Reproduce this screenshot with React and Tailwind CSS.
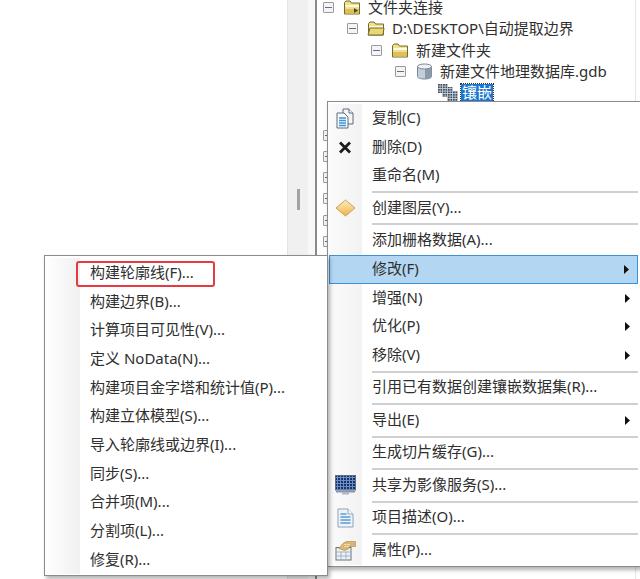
// App.jsx
const font = { fontFamily: '"Noto Sans", "Noto Sans CJK SC", sans-serif' };

const FolderIcon = ({ play, open }) => (
  <svg width="18" height="15" viewBox="0 0 18 15">
    <path d="M1.5 14V2.5L3 1h4l1.5 2H16.5V14z" fill="#f0e08c" stroke="#77692c" />
    <path d="M2.5 5h13.5v2H2.5z" fill="#fffbe0" />
    <path d="M2 9h14v4.5H2z" fill="#dcc254" />
    {open && <path d="M1 14l2-7h14l-1 7z" fill="#ecd873" stroke="#77692c" />}
    {play && <path d="M11 8v5l4-2.5z" fill="#4a4a30" />}
  </svg>
);

const DbIcon = () => (
  <svg width="17" height="17" viewBox="0 0 17 17">
    <path d="M1.5 3.5v10c0 1.5 3 2.5 7 2.5s7-1 7-2.5v-10z" fill="#c3cedb" stroke="#7b8794" />
    <path d="M9 4.5h6.5v9c0 1.500-3 2.500-6.500 2.500z" fill="#8c99a8" />
    <ellipse cx="8.500" cy="3.500" rx="7" ry="2.500" fill="#eef2f6" stroke="#7b8794" />
  </svg>
);

const MosaicIcon = () => (
  <svg width="20" height="18" viewBox="0 0 20 18">
    <defs>
      <pattern id="mos" width="2.500" height="2.500" patternUnits="userSpaceOnUse">
        <rect width="2.500" height="2.500" fill="#c9d1db" />
        <rect width="1.700" height="1.700" fill="#3f4d5f" />
      </pattern>
    </defs>
    <rect x="0" y="0" width="10" height="9" fill="url(#mos)" />
    <rect x="4" y="3" width="11" height="10" fill="url(#mos)" />
    <rect x="9" y="7" width="11" height="11" fill="url(#mos)" />
  </svg>
);

const CopyIcon = () => (
  <svg width="18" height="21" viewBox="0 0 18 21">
    <path d="M7 1h6l4 4v11H7z" fill="#f3f5f8" stroke="#5f6b78" />
    <path d="M13 1v4h4" fill="#fff" stroke="#5f6b78" />
    <path d="M1 5h7l4 4v11H1z" fill="#f7f9fb" stroke="#5f6b78" />
    <path d="M3 10h7M3 12.500h7M3 15h7M3 17.500h7" stroke="#3f93d8" strokeWidth="1.300" />
  </svg>
);

const DeleteIcon = () => (
  <svg width="14" height="13" viewBox="0 0 14 13">
    <path d="M2 1.500l10 10M12 1.500l-10 10" stroke="#1c1c1c" strokeWidth="2.800" />
  </svg>
);

const LayerIcon = () => (
  <svg width="21" height="18" viewBox="0 0 21 18">
    <defs>
      <linearGradient id="dia" x1="0" y1="0" x2="0" y2="1">
        <stop offset="0" stopColor="#fff0bd" />
        <stop offset="1" stopColor="#eeb04a" />
      </linearGradient>
    </defs>
    <path d="M10.500 1L20 9l-9.500 8L1 9z" fill="url(#dia)" stroke="#c9a35c" />
  </svg>
);

const RasterIcon = () => (
  <svg width="21" height="21" viewBox="0 0 21 21">
    <defs>
      <pattern id="ras" width="3" height="3" patternUnits="userSpaceOnUse">
        <rect width="3" height="3" fill="#6f8fb8" />
        <rect width="2" height="2" fill="#16317c" />
      </pattern>
    </defs>
    <rect x="0.500" y="0.500" width="20" height="14.500" fill="url(#ras)" stroke="#5c7187" />
    <path d="M1 15.500h19v2H1z" fill="#8796a8" />
    <path d="M7 17.500h7v2H7z" fill="#a8b4c2" />
  </svg>
);

const DocIcon = () => (
  <svg width="17" height="20" viewBox="0 0 17 20">
    <path d="M1 1h10l5 5v13H1z" fill="#eef3f8" stroke="#8fa3b8" />
    <path d="M11 1v5h5" fill="#fff" stroke="#8fa3b8" />
    <path d="M3.500 6h6M3.500 9h10M3.500 12h10M3.500 15h10" stroke="#5b9bd5" strokeWidth="1.300" />
  </svg>
);

const PropsIcon = () => (
  <svg width="21" height="21" viewBox="0 0 21 21">
    <rect x="1" y="7.500" width="15" height="12.500" fill="#eef2f6" stroke="#66737f" />
    <path d="M1 12h15M6 12v8M11 12v8M1 16h15" stroke="#9fb2c6" />
    <path d="M3.500 8.500L8 3.500l3-2h9.500v5H15l-1.500 2.500-4 1.500z" fill="#d9b56e" stroke="#a98a4b" strokeWidth="0.600" />
    <path d="M9 4.500h6M9 6.500h5" stroke="#f1dba8" />
  </svg>
);

const Arrow = () => (
  <svg width="5" height="9" viewBox="0 0 5 9" className="shrink-0">
    <path d="M0 0l5 4.500L0 9z" fill="#111" />
  </svg>
);

const treeRows = [
  { pad: "pl-0", icon: <FolderIcon play />, label: "文件夹连接" },
  { pad: "pl-6", icon: <FolderIcon open />, label: "D:\\DESKTOP\\自动提取边界" },
  { pad: "pl-12", icon: <FolderIcon />, label: "新建文件夹" },
  { pad: "pl-[72px]", icon: <DbIcon />, label: "新建文件地理数据库.gdb" },
];

const mainMenu = [
  { label: "复制(C)", icon: <CopyIcon /> },
  { label: "删除(D)", icon: <DeleteIcon /> },
  { label: "重命名(M)" },
  { sep: true },
  { label: "创建图层(Y)...", icon: <LayerIcon /> },
  { sep: true },
  { label: "添加栅格数据(A)..." },
  { label: "修改(F)", sub: true, active: true },
  { label: "增强(N)", sub: true },
  { label: "优化(P)", sub: true },
  { label: "移除(V)", sub: true },
  { sep: true },
  { label: "引用已有数据创建镶嵌数据集(R)..." },
  { sep: true },
  { label: "导出(E)", sub: true },
  { sep: true },
  { label: "生成切片缓存(G)..." },
  { sep: true },
  { label: "共享为影像服务(S)...", icon: <RasterIcon /> },
  { sep: true },
  { label: "项目描述(O)...", icon: <DocIcon /> },
  { sep: true },
  { label: "属性(P)...", icon: <PropsIcon /> },
];

const subMenu = [
  "构建轮廓线(F)...",
  "构建边界(B)...",
  "计算项目可见性(V)...",
  "定义 NoData(N)...",
  "构建项目金字塔和统计值(P)...",
  "构建立体模型(S)...",
  "导入轮廓线或边界(I)...",
  "同步(S)...",
  "合并项(M)...",
  "分割项(L)...",
  "修复(R)...",
];

const ExpandBox = () => (
  <span className="flex items-center justify-center w-[11px] h-[11px] shrink-0 mr-[9px] border border-[#9a9a9a] rounded-[1px] bg-[#f4f4f4]">
    <span className="w-[7px] h-px bg-[#5b6f9c]" />
  </span>
);

const MainMenuRow = ({ item }) => {
  if (item.sep) {
    return (
      <div className="flex h-[3.8px] shrink-0">
        <div className="w-[34px] bg-linear-to-r from-[#fbfbfb] to-[#f2f2f2]" />
        <div className="flex-1 ml-[10px] mr-[2px] flex items-center">
          <div className="w-full h-[2px] bg-[#d0d0d0]" />
        </div>
      </div>
    );
  }
  return (
    <div
      className={
        item.active
          ? "flex items-center h-[28.7px] shrink-0 ml-px mr-[2px] bg-[#b3d7f3] border border-[#3f92d8]"
          : "flex items-center h-[28.7px] shrink-0 mr-[2px]"
      }
    >
      <div
        className={
          item.active
            ? "flex items-center justify-center w-[32px] h-full shrink-0"
            : "flex items-center justify-center w-[34px] h-full shrink-0 bg-linear-to-r from-[#fbfbfb] to-[#f2f2f2]"
        }
      >
        {item.icon}
      </div>
      <span className="flex-1 pl-[10px] pb-[2px] text-[15px] leading-none text-[#2f2f2f] whitespace-nowrap">
        {item.label}
      </span>
      {item.sub && (
        <span className="pr-[8px]">
          <Arrow />
        </span>
      )}
    </div>
  );
};

export default function App() {
  return (
    <div className="relative flex w-[640px] h-[579px] overflow-hidden bg-white" style={font}>
      <div className="w-[287px] shrink-0 bg-white" />
      <div className="flex items-center justify-center w-[21px] shrink-0 bg-[#f0f0f0] border-l border-[#e3e3e3] pb-[181px]">
        <div className="w-[3px] h-[21px] bg-[#a3a3a3]" />
      </div>
      <div className="w-[7px] shrink-0 bg-[#f8f8f8]" />
      <div className="w-[2px] shrink-0 bg-[#8a8a8a]" />

      {/* catalog tree */}
      <div className="flex-1 mr-[4px] pl-[6px] -mt-[3px] flex flex-col border-r border-[#e6e6e6]">
        {treeRows.map((row) => (
          <div key={row.label} className={`flex items-center h-[21.25px] shrink-0 ${row.pad}`}>
            <ExpandBox />
            <span className="flex items-center justify-center w-[18px] mr-[7px] shrink-0">{row.icon}</span>
            <span className="text-[15px] leading-none text-[#2f2f2f] whitespace-nowrap">{row.label}</span>
          </div>
        ))}
        <div className="flex items-center h-[21.25px] shrink-0 pl-[115px]">
          <MosaicIcon />
          <span className="ml-[3px] px-px h-[18px] flex items-center bg-[#1a78d2] outline-1 outline-dotted outline-[#3a3020] text-[15px] leading-none text-white whitespace-nowrap">
            镶嵌
          </span>
        </div>
        <div className="h-[21.25px] shrink-0" />
        {[0, 1, 2, 3, 4, 5].map((n) => (
          <div key={n} className="flex items-center h-[21.25px] shrink-0">
            <ExpandBox />
          </div>
        ))}
      </div>

      {/* context menu */}
      <div className="absolute left-[327px] top-[101px] w-[314px] flex flex-col pt-[2px] pb-[1.5px] bg-white border border-[#8c8c8c] shadow-[2px_3px_4px_rgba(0,0,0,0.3)]">
        {mainMenu.map((item, i) => (
          <MainMenuRow key={i} item={item} />
        ))}
      </div>

      {/* 修改 submenu */}
      <div className="absolute left-[44px] top-[255px] w-[284px] flex flex-col pt-[2px] pb-px bg-white border border-[#8c8c8c] shadow-[2px_3px_4px_rgba(0,0,0,0.3)]">
        {subMenu.map((label) => (
          <div key={label} className="flex items-center h-[28.7px] shrink-0">
            <div className="w-[35px] h-full shrink-0 bg-linear-to-r from-[#ffffff] to-[#f0f0f0]" />
            <span className="pl-[10px] text-[15px] leading-none text-[#2f2f2f] whitespace-nowrap">{label}</span>
          </div>
        ))}
        <div className="absolute left-[31px] top-[5px] w-[139px] h-[26px] rounded-[3px] border-2 border-[#e53a3f]" />
      </div>
    </div>
  );
}
